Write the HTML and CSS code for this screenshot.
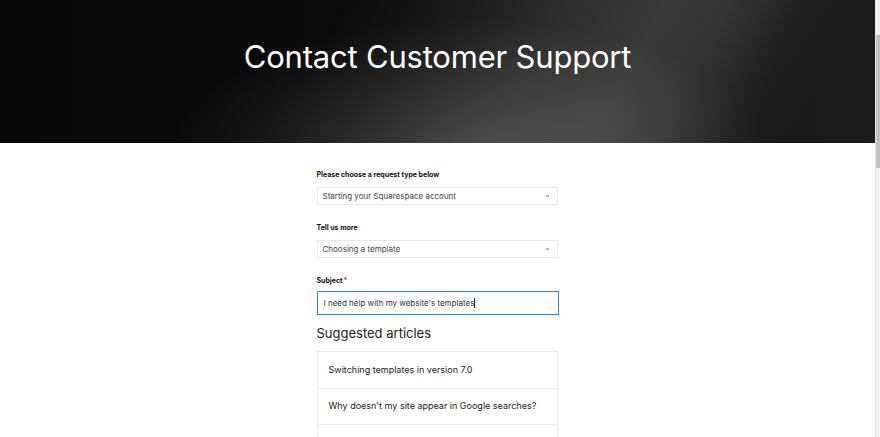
FILE: index.html
```html
<!DOCTYPE html>
<html lang="en">
<head>
<meta charset="utf-8">
<title>Contact Customer Support</title>
<link rel="stylesheet" href="styles.css">
</head>
<body>
<div class="page">
  <div class="content">
    <header class="hero">
      <h1 class="hero-title">Contact Customer Support</h1>
    </header>
    <main class="form-wrap">
      <form class="form">
        <div class="field">
          <label class="label">Please choose a request type below</label>
          <div class="select"><span>Starting your Squarespace account</span><span class="caret"></span></div>
        </div>
        <div class="field">
          <label class="label">Tell us more</label>
          <div class="select"><span>Choosing a template</span><span class="caret"></span></div>
        </div>
        <div class="field field-last">
          <label class="label label-tight">Subject<span class="req">*</span></label>
          <div class="input"><span>I need help with my website's templates</span><span class="cursor"></span></div>
        </div>
        <h2 class="suggested">Suggested articles</h2>
        <ul class="articles">
          <li class="article">Switching templates in version 7.0</li>
          <li class="article">Why doesn't my site appear in Google searches?</li>
          <li class="article">Managing a Squarespace site</li>
        </ul>
      </form>
    </main>
  </div>
  <div class="scrollbar"><div class="thumb"></div></div>
</div>
</body>
</html>
```
FILE: styles.css
```css
* { box-sizing: border-box; }
html, body { margin: 0; padding: 0; height: 100%; overflow: hidden; }
body { font-family: "Inter", "Liberation Sans", sans-serif; background: #fff; color: #222; }
.page { display: flex; height: 437px; }
.content { flex: 1; min-width: 0; }
.scrollbar { width: 5px; background: #f1f1f1; border-left: 1px solid #e6e6e6; display: flex; flex-direction: column; padding-top: 35px; }
.thumb { height: 133px; background: #c1c1c1; }
.hero {
  height: 143px;
  display: flex; justify-content: center; align-items: flex-start;
  background:
    radial-gradient(ellipse 300px 130px at 470px 150px, rgba(255,255,255,0.16), rgba(255,255,255,0) 100%),
    linear-gradient(118deg, rgba(255,255,255,0) 0%, rgba(255,255,255,0) 36%, rgba(255,255,255,0.05) 48%, rgba(255,255,255,0.12) 60%, rgba(255,255,255,0.16) 70%, rgba(255,255,255,0.13) 77%, rgba(255,255,255,0.03) 85%, rgba(255,255,255,0) 91%),
    linear-gradient(90deg, #080808 0%, #0b0b0b 45%, #141414 75%, #1b1b1b 100%);
}
.hero-title { margin: 38px 0 0; font-weight: 400; font-size: 31px; color: #fff; letter-spacing: -0.2px; }
.form-wrap { display: flex; justify-content: center; }
.form { width: 242px; padding-top: 27px; }
.field { margin-bottom: 18px; }
.field-last { margin-bottom: 10px; }
.label { display: block; font-size: 7px; font-weight: 700; color: #111; line-height: 9px; margin-bottom: 8px; }
.label-tight { margin-bottom: 6px; }
.req { color: #e0203a; margin-left: 1px; }
.select {
  width: 241px; height: 18px; border: 1px solid #e8e8e8; background: #fff;
  display: flex; align-items: center; justify-content: space-between;
  padding: 0 8px 0 5px; font-size: 8px; color: #444;
}
.caret { width: 3px; height: 2px; background: #b5b5b5; }
.input {
  width: 242px; height: 24px; border: 1.5px solid #2b8fd3; background: #fff;
  display: flex; align-items: center; padding: 0 6px; font-size: 8px; color: #333;
}
.cursor { width: 1px; height: 10px; background: #222; }
.suggested { margin: 0 0 10px; font-size: 13px; font-weight: 400; color: #222; line-height: 16px; }
.articles { list-style: none; margin: 0; padding: 0; width: 241px; border: 1px solid #ececec; }
.article { height: 36px; display: flex; align-items: center; padding: 0 11px 2px; font-size: 9px; color: #222; border-top: 1px solid #ececec; }
.article:first-child { border-top: none; }
```
